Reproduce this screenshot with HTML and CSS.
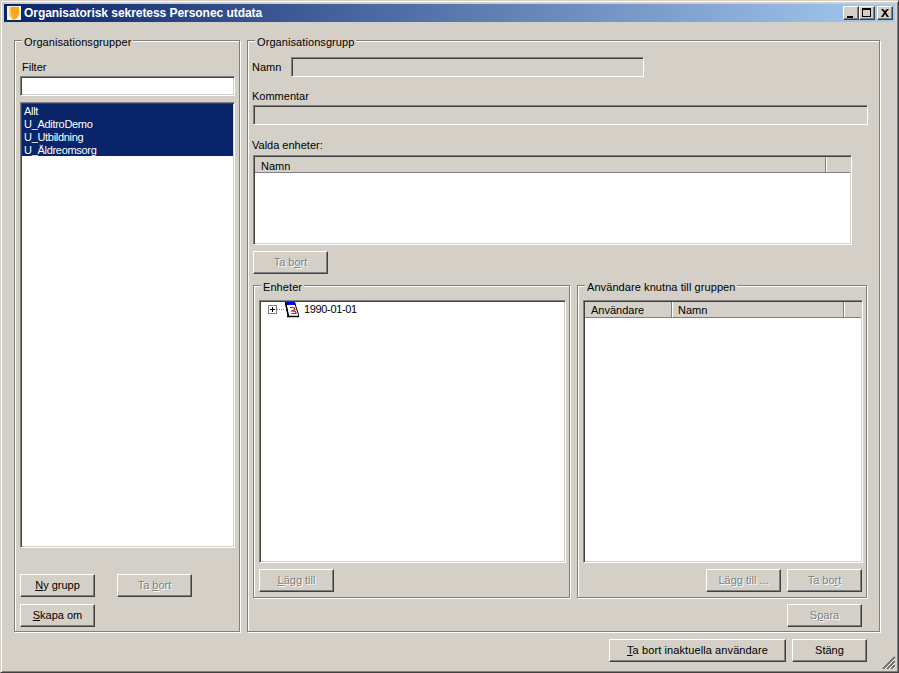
FILE: index.html
```html
<!DOCTYPE html>
<html lang="sv">
<head>
<meta charset="utf-8">
<title>Organisatorisk sekretess Personec utdata</title>
<link rel="stylesheet" href="styles.css">
</head>
<body>
<div class="window">
  <header class="titlebar">
    <svg class="app-icon" width="16" height="16" viewBox="0 0 16 16"><rect x="1" y="1" width="14" height="14" fill="#fbf3dc"/><path d="M3 2h10v6c0 3-2 5-5 7-3-1-5-4-5-7z" fill="#f7a81b"/><path d="M3 2h2c-1 5 0 9 3 13-3-1-5-4-5-7z" fill="#fbd278"/></svg>
    <span class="title-text">Organisatorisk sekretess Personec utdata</span>
    <div class="caption-buttons">
      <button class="caption-btn"><svg width="12" height="10" viewBox="0 0 12 10"><path d="M2 8h6v2H2z"/></svg></button>
      <button class="caption-btn"><svg width="12" height="10" viewBox="0 0 12 10"><path fill-rule="evenodd" d="M1 0h9v9H1zM2 2v6h7V2z"/></svg></button>
      <button class="caption-btn close"><svg width="12" height="10" viewBox="0 0 12 10"><path d="M2 1h2l2 2 2-2h2L7 4.500 10 9H8L6 6 4 9H2l3-4.500z"/></svg></button>
    </div>
  </header>

  <main class="panels">
    <section class="group left-group">
      <span class="legend">Organisationsgrupper</span>
      <label class="label filter-label">Filter</label>
      <div class="sunken filter-input"></div>
      <ul class="sunken group-list">
        <li>Allt</li>
        <li>U_AditroDemo</li>
        <li>U_Utbildning</li>
        <li>U_Äldreomsorg</li>
      </ul>
      <div class="btn-row first-row">
        <button class="btn"><u>N</u>y grupp</button>
        <button class="btn disabled">Ta <u>b</u>ort</button>
      </div>
      <div class="btn-row second-row">
        <button class="btn"><u>S</u>kapa om</button>
      </div>
    </section>

    <section class="group right-group">
      <span class="legend">Organisationsgrupp</span>
      <div class="name-row">
        <label class="label name-label">Namn</label>
        <div class="sunken name-input"></div>
      </div>
      <label class="label comment-label">Kommentar</label>
      <div class="sunken comment-input"></div>
      <label class="label units-label">Valda enheter:</label>
      <div class="sunken units-list">
        <div class="list-head">
          <span class="col units-col">Namn</span>
          <span class="col-rest"></span>
        </div>
      </div>
      <button class="btn disabled units-remove">Ta b<u>o</u>rt</button>

      <div class="subgroups">
        <section class="group unit-group">
          <span class="legend">Enheter</span>
          <div class="sunken tree">
            <div class="tree-node">
              <span class="expander"></span>
              <span class="tree-dots"></span>
              <svg class="tree-icon" width="16" height="17" viewBox="0 0 16 17">
                <path d="M1.500 1.500h9l4 12v2h-10z" fill="#fff" stroke="#000"/>
                <path d="M1 1h10l1 3H2z" fill="#0000e0"/>
                <path d="M1.500 1.500l3 14.500M3 15.500h12" fill="none" stroke="#000" stroke-width="1.500"/>
                <path d="M6 6.500h4l1 2-3 1.500 3.500 .5 .5 2H7.500" fill="none" stroke="#e01010" stroke-width="1.200"/>
              </svg>
              <span class="tree-label">1990-01-01</span>
            </div>
          </div>
          <button class="btn disabled add-unit"><u>L</u>ägg till</button>
        </section>

        <section class="group user-group">
          <span class="legend">Användare knutna till gruppen</span>
          <div class="sunken users-list">
            <div class="list-head">
              <span class="col user-col">Användare</span>
              <span class="col user-name-col">Namn</span>
              <span class="col-rest"></span>
            </div>
          </div>
          <div class="btn-row user-buttons">
            <button class="btn disabled">Lä<u>g</u>g till ...</button>
            <button class="btn disabled">Ta bo<u>r</u>t</button>
          </div>
        </section>
      </div>

      <button class="btn disabled save">S<u>p</u>ara</button>
    </section>
  </main>

  <footer class="footer">
    <button class="btn wide"><u>T</u>a bort inaktuella användare</button>
    <button class="btn">Stän<u>g</u></button>
  </footer>
  <svg class="grip" width="13" height="13" viewBox="0 0 13 13">
    <path d="M13 1L1 13M13 5L5 13M13 9L9 13" stroke="#707070" stroke-width="2"/>
    <path d="M13 3L3 13M13 7L7 13M13 11L11 13" stroke="#fff" stroke-width="1"/>
  </svg>
</div>
</body>
</html>
```
FILE: styles.css
```css
* { box-sizing: border-box; }
html, body { margin: 0; padding: 0; }
body {
  width: 899px;
  height: 673px;
  overflow: hidden;
  font-family: "Liberation Sans", Arial, sans-serif;
  font-size: 11px;
  line-height: 13px;
  color: #000;
  background: #d4d0c8;
}
.window {
  position: relative;
  width: 899px;
  height: 673px;
  padding: 3px;
  border: 1px solid;
  border-color: #d4d0c8 #404040 #404040 #d4d0c8;
  box-shadow: inset 1px 1px 0 #fff, inset -1px -1px 0 #808080;
  background: #d4d0c8;
}
.titlebar {
  display: flex;
  align-items: center;
  height: 18px;
  padding: 0 2px 0 2px;
  background: linear-gradient(90deg, #0a246a 0%, #a6caf0 100%);
}
.app-icon { flex: none; }
.title-text {
  margin-left: 2px;
  color: #fff;
  font-weight: bold;
  font-size: 12px;
  letter-spacing: -.05px;
  white-space: nowrap;
}
.caption-buttons { display: flex; margin-left: auto; }
.caption-btn {
  width: 16px;
  height: 14px;
  padding: 0;
  display: flex;
  align-items: center;
  justify-content: center;
  border: 1px solid;
  border-color: #fff #404040 #404040 #fff;
  box-shadow: inset -1px -1px 0 #808080;
  background: #d4d0c8;
}
.caption-btn.close { margin-left: 2px; }
.caption-btn svg { display: block; }

.panels {
  display: flex;
  gap: 7px;
  padding: 18px 0 0 10px;
}
.group {
  position: relative;
  border: 1px solid #808080;
  box-shadow: inset 1px 1px 0 #fff, 1px 1px 0 #fff;
}
.legend {
  position: absolute;
  top: -5px;
  left: 7px;
  padding: 0 2px;
  background: linear-gradient(#d4d0c8, #d4d0c8) 0 0 / 100% 100% no-repeat;
  white-space: nowrap;
  letter-spacing: .08px;
}
.label { display: block; }
.sunken {
  border: 1px solid;
  border-color: #808080 #fff #fff #808080;
  box-shadow: inset 1px 1px 0 #404040, inset -1px -1px 0 #d4d0c8;
}
.btn {
  display: block;
  width: 75px;
  height: 23px;
  padding: 0;
  border: 1px solid;
  border-color: #fff #404040 #404040 #fff;
  box-shadow: inset -1px -1px 0 #808080;
  background: #d4d0c8;
  font: inherit;
  color: #000;
  text-align: center;
}
.btn.disabled { color: #808080; text-shadow: 1px 1px 0 #fff; }
.btn-row { display: flex; }

.left-group {
  width: 226px;
  height: 592px;
  padding: 20px 0 0 5px;
}
.filter-label { height: 15px; padding-left: 2px; }
.filter-input { width: 215px; height: 20px; background: #fff; }
.group-list {
  width: 215px;
  height: 446px;
  margin: 6px 0 0;
  padding: 1px;
  list-style: none;
  background: #fff;
  letter-spacing: -.3px;
}
.group-list li {
  height: 13px;
  padding: 1px 0 0 2px;
  background: #0a246a;
  color: #fff;
}
.first-row { margin-top: 26px; gap: 22px; }
.second-row { margin-top: 7px; }

.right-group {
  display: flex;
  flex-direction: column;
  width: 633px;
  height: 592px;
  padding: 16px 0 0 5px;
}
.name-row { display: flex; align-items: center; height: 20px; margin-left: -1px; }
.name-label { width: 39px; }
.name-input { width: 353px; height: 20px; }
.comment-label { margin: 13px 0 2px -1px; }
.comment-input { width: 615px; height: 20px; }
.units-label { margin: 14px 0 3px -1px; }
.units-list { width: 599px; height: 90px; background: #fff; padding: 1px; }
.list-head {
  display: flex;
  height: 16px;
  background: #d4d0c8;
  border-bottom: 1px solid #808080;
}
.col {
  flex: none;
  padding: 2px 0 0 6px;
  border-right: 1px solid #808080;
  box-shadow: 1px 0 0 #fff;
}
.col-rest { flex: 1; }
.units-col { width: 571px; padding-top: 3px; }
.units-remove { margin-top: 6px; }

.subgroups { display: flex; gap: 7px; margin-top: 11px; }
.unit-group { width: 317px; height: 313px; padding: 14px 0 0 5px; }
.user-group { width: 290px; height: 313px; padding: 14px 0 0 5px; }
.tree { width: 307px; height: 263px; background: #fff; }
.tree-node { display: flex; align-items: center; height: 17px; margin: 0 0 0 8px; }
.expander {
  position: relative;
  width: 9px;
  height: 9px;
  border: 1px solid #808080;
  background:
    linear-gradient(#000, #000) center / 5px 1px no-repeat,
    linear-gradient(#000, #000) center / 1px 5px no-repeat,
    #fff;
}
.tree-dots { width: 7px; height: 1px; border-top: 1px dotted #808080; }
.tree-icon { flex: none; }
.tree-label { margin-left: 4px; letter-spacing: -.35px; }
.add-unit { margin-top: 6px; }

.users-list { width: 280px; height: 263px; background: #fff; padding: 1px; }
.user-col { width: 87px; }
.user-name-col { width: 172px; }
.user-buttons { justify-content: flex-end; gap: 6px; margin: 6px 4px 0 0; }
.save { align-self: flex-end; margin: 6px 17px 0 0; }

.footer {
  display: flex;
  justify-content: flex-end;
  gap: 6px;
  margin-top: 7px;
  padding-right: 28px;
}
.btn.wide { width: 177px; letter-spacing: .1px; }
.grip { position: absolute; right: 3px; bottom: 3px; }
```
